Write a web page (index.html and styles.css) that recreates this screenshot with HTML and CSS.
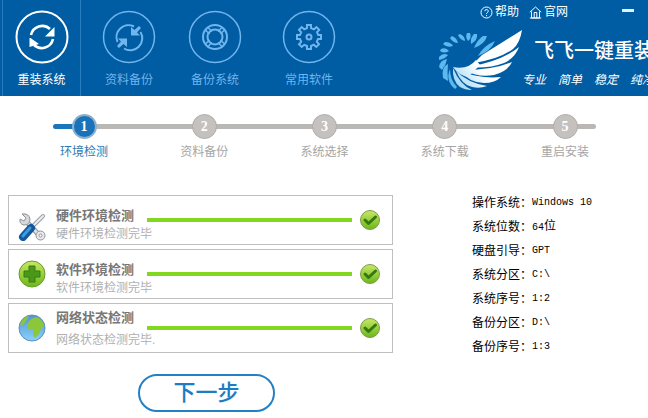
FILE: index.html
```html
<!DOCTYPE html>
<html lang="zh-CN">
<head>
    <meta charset="UTF-8">
    <meta name="viewport" content="width=device-width, initial-scale=1.0">
    <title>飞飞一键重装系统</title>
    <link rel="stylesheet" href="styles.css">
</head>
<body>
    <header class="header">
        <nav class="tabs">
            <button class="tab active">
                <svg class="tab-icon" viewBox="0 0 54 54">
                    <circle cx="27" cy="27" r="25.500" stroke-width="2"/>
                    <path d="M16 25a11.500 11.500 0 0 1 19-6M38 29a11.500 11.500 0 0 1-19 6" stroke-width="2.600"/>
                    <path class="solid" d="M39.500 17v9.500h-9.500zM14.500 28h1l8.500 6-9.500 3z"/>
                </svg>
                <span>重装系统</span>
            </button>
            <button class="tab">
                <svg class="tab-icon" viewBox="0 0 54 54">
                    <circle cx="27" cy="27" r="25.500"/>
                    <path d="M32 16.500a12 12 0 0 0-16.500 15.500M38.500 22a12 12 0 0 1-16.500 16.500" stroke-width="2"/>
                    <path class="solid" d="M29 17v8.500h9l-3-3 4-4.500-2-2-4.500 4zM25 37v-8.500h-9l3 3-4 4.500 2 2 4.500-4z"/>
                </svg>
                <span>资料备份</span>
            </button>
            <button class="tab">
                <svg class="tab-icon" viewBox="0 0 54 54">
                    <circle cx="27" cy="27" r="25.500"/>
                    <circle cx="27" cy="27" r="12" stroke-width="2"/>
                    <circle cx="27" cy="27" r="7.500" stroke-width="2"/>
                    <path d="M20 17.500l4 4M17.500 20l4 4M34 17.500l-4 4M36.500 20l-4 4M20 36.500l4-4M17.500 34l4-4M34 36.500l-4-4M36.500 34l-4-4"/>
                </svg>
                <span>备份系统</span>
            </button>
            <button class="tab spaced">
                <svg class="tab-icon" viewBox="0 0 54 54">
                    <circle cx="27" cy="27" r="25.500"/>
                    <path d="M25 15h4v3l3 1.300 2.500-2.200 2.700 2.700-2.200 2.500 1.200 2.700H39v4h-3l-1.200 2.700 2.200 2.500-2.700 2.700-2.500-2.200L29 36v3h-4v-3l-2.800-1.200-2.500 2.200-2.700-2.700 2.200-2.500L18 29h-3v-4h3l1.200-2.700-2.200-2.500 2.700-2.700 2.500 2.200L25 18z" stroke-width="2"/>
                    <circle cx="27" cy="27" r="2.500" stroke-width="2"/>
                </svg>
                <span>常用软件</span>
            </button>
        </nav>

        <div class="header-right">
            <div class="top-links">
                <a href="#">
                    <svg viewBox="0 0 13 13"><circle cx="6.500" cy="6.500" r="5.500"/><path d="M4.800 5.200a1.700 1.700 0 1 1 2.500 1.500q-.8.4-.8 1.300M6.500 9v1.200"/></svg>帮助</a>
                <a href="#">
                    <svg viewBox="0 0 13 13"><path d="M.8 6.200L6.500 1l5.700 5.200M2.500 5.500V12h8V5.500M5.200 12V6.500h2.600V12M.8 12h11.400"/></svg>官网</a>
                <button class="minimize" aria-label="最小化"></button>
            </div>
            <div class="brand">
                <svg class="logo" viewBox="0 0 84 62">
                    <defs>
                        <linearGradient id="wing" gradientUnits="userSpaceOnUse" x1="14" y1="58" x2="50" y2="28">
                            <stop offset="0" stop-color="#8fd0f4"/>
                            <stop offset=".7" stop-color="#fff"/>
                        </linearGradient>
                    </defs>
                    <!-- ring of small feathers -->
                    <g fill="#5db8ee">
                        <path d="M57 12Q53 22 40 27 45 17 57 12z"/>
                        <path d="M49 7Q47 15 36 19 39 11 45 7z"/>
                        <path d="M39 5Q40 11 33 15 32 9 36 5z"/>
                        <path d="M32 4Q34 9 30 12 27 8 29 4z"/>
                        <path d="M22 5Q27 7 27 12 22 11 20 6z"/>
                        <path d="M14 7Q19 9 20 14 15 14 12 9z"/>
                        <path d="M7 13Q13 13 15 17 9 19 5 15z"/>
                        <path d="M3 20Q8 18 11 22 6 25 2 22z"/>
                        <path d="M1 28Q5 23 10 26 7 30 1 31z"/>
                        <path d="M1 38Q2 31 9 30 8 36 4 41z"/>
                        <path d="M5 49Q3 38 10 35 9 43 10 52z"/>
                        <path d="M17 60Q7 52 12 40 12 51 19 58z"/>
                    </g>
                    <g fill="url(#wing)">
                        <path d="M84 1Q62 15 44 26L36 34Q62 30 75 20 82 14 84 1z"/>
                        <path d="M81 18Q64 32 30 38 50 40 66 34 77 29 81 18z"/>
                        <path d="M74 33Q56 41 26 41 40 49 56 46 69 43 74 33z"/>
                        <path d="M63 48Q42 50 22 42 32 54 46 54 57 54 63 48z"/>
                        <path d="M49 57Q30 54 18 42 24 56 34 58 42 60 49 57z"/>
                        <path d="M34 61Q22 56 15 39 14 52 22 58 27 61 34 61z"/>
                        <path d="M15 38Q30 41 38 31L42 36 30 48Q20 46 15 38z"/>
                    </g>
                </svg>
                <div class="brand-text">
                    <h1>飞飞一键重装</h1>
                    <p><span>专业</span><span>简单</span><span>稳定</span><span>纯净</span></p>
                </div>
            </div>
        </div>
    </header>

    <ol class="steps">
        <li class="current"><b>1</b><span>环境检测</span></li>
        <li><b>2</b><span>资料备份</span></li>
        <li><b>3</b><span>系统选择</span></li>
        <li><b>4</b><span>系统下载</span></li>
        <li><b>5</b><span>重启安装</span></li>
    </ol>

    <main class="content">
        <section class="checks">
            <div class="panel">
                <svg class="panel-icon low" viewBox="0 0 28 28">
                    <path d="M7 7l14 15" stroke="#8d9499" stroke-width="5"/>
                    <path d="M7 7l14 15" stroke="#dfe3e6" stroke-width="3"/>
                    <path d="M4 1l4 4-2 3-4-2q-1 5 4 6 6 0 6-6-1-6-8-5z" fill="#d5d9dc" stroke="#8d9499"/>
                    <circle cx="22.500" cy="22.500" r="4.500" fill="#e8eaec" stroke="#8d9499"/>
                    <circle cx="22.500" cy="22.500" r="1.500" fill="#fff" stroke="#8d9499"/>
                    <path d="M25 3L13 15" stroke="#979ea3" stroke-width="4" stroke-linecap="round"/>
                    <path d="M25 3L13 15" stroke="#eceeef" stroke-width="2" stroke-linecap="round"/>
                    <path d="M13 15L5 24" stroke="#14589b" stroke-width="8" stroke-linecap="round"/>
                    <path d="M12 15L5 23" stroke="#3e9ae0" stroke-width="3" stroke-linecap="round"/>
                </svg>
                <div class="panel-text">
                    <h2>硬件环境检测</h2>
                    <p>硬件环境检测完毕</p>
                </div>
                <div class="bar"></div>
                <svg class="tick" viewBox="0 0 20 20"><use href="#tick"/></svg>
            </div>
            <div class="panel">
                <svg class="panel-icon" viewBox="0 0 28 28">
                    <defs>
                        <linearGradient id="green" x1="0" y1="0" x2="0" y2="1">
                            <stop offset="0" stop-color="#c9e765"/>
                            <stop offset="1" stop-color="#6cb71a"/>
                        </linearGradient>
                    </defs>
                    <circle cx="14" cy="14" r="13" fill="url(#green)" stroke="#6a9c2c"/>
                    <path d="M11 6h6v5h5v6h-5v5h-6v-5H6v-6h5z" fill="#4a9818" stroke="#357a10" stroke-linejoin="round"/>
                </svg>
                <div class="panel-text">
                    <h2>软件环境检测</h2>
                    <p>软件环境检测完毕</p>
                </div>
                <div class="bar"></div>
                <svg class="tick" viewBox="0 0 20 20"><use href="#tick"/></svg>
            </div>
            <div class="panel">
                <svg class="panel-icon" viewBox="0 0 28 28">
                    <defs>
                        <linearGradient id="sea" x1="0" y1="0" x2="0" y2="1">
                            <stop offset="0" stop-color="#4f94d8"/>
                            <stop offset="1" stop-color="#8ad2f8"/>
                        </linearGradient>
                    </defs>
                    <circle cx="14" cy="14" r="13" fill="url(#sea)" stroke="#5b8fc0"/>
                    <path d="M12 6q5-4 9-2 4 3 5 8l-3 3-2 5-4 4-2-3v-5l-5-1-1-4zM2 10q2-5 7-8l2 1-3 4-4 5z" fill="#8cc63a"/>
                </svg>
                <div class="panel-text loose">
                    <h2>网络状态检测</h2>
                    <p>网络状态检测完毕.</p>
                </div>
                <div class="bar"></div>
                <svg class="tick" viewBox="0 0 20 20">
                    <g id="tick">
                        <circle cx="10" cy="10" r="9.500" fill="url(#green)" stroke="#7d9b50"/>
                        <path d="M5 10l3.500 3.500L15.500 7" fill="none" stroke="#33790f" stroke-width="3" stroke-linecap="round" stroke-linejoin="round"/>
                    </g>
                </svg>
            </div>
            <button class="next">下一步</button>
        </section>

        <dl class="info">
            <div><dt>操作系统：</dt><dd>Windows 10</dd></div>
            <div><dt>系统位数：</dt><dd>64<span>位</span></dd></div>
            <div><dt>硬盘引导：</dt><dd>GPT</dd></div>
            <div><dt>系统分区：</dt><dd>C:\</dd></div>
            <div><dt>系统序号：</dt><dd>1:2</dd></div>
            <div><dt>备份分区：</dt><dd>D:\</dd></div>
            <div><dt>备份序号：</dt><dd>1:3</dd></div>
        </dl>
    </main>
</body>
</html>
```
FILE: styles.css
```css
* {
    box-sizing: border-box;
    margin: 0;
    padding: 0;
}

body {
    font-family: "Liberation Sans", "Noto Sans CJK SC", sans-serif;
    font-size: 12px;
    line-height: 18px;
    background-color: #fff;
    color: #000;
}

button {
    font: inherit;
    background: none;
    border: none;
    cursor: pointer;
}

/* Header */
.header {
    display: flex;
    justify-content: space-between;
    height: 96px;
    overflow: hidden;
    background-color: #005ca3;
}

.tabs {
    display: flex;
    padding-left: 2px;
}

.tab {
    display: flex;
    flex-direction: column;
    align-items: center;
    gap: 7px;
    width: 86px;
    padding-top: 10px;
    color: #6fb5ee;
}

.tab.active {
    width: 79px;
    margin-right: 5px;
    color: #fff;
    border-left: 1px solid #2a7cbd;
    border-right: 1px solid #2a7cbd;
}

.tab.spaced {
    margin-left: 8px;
}

.tab-icon {
    width: 54px;
    height: 54px;
    fill: none;
    stroke: currentColor;
    stroke-width: 1.5;
}

.tab-icon .solid {
    fill: currentColor;
    stroke: none;
}

.header-right {
    flex: none;
    width: 210px;
}

.top-links {
    display: flex;
    align-items: center;
    gap: 10px;
    height: 24px;
    padding: 0 14px 0 42px;
}

.top-links a {
    display: flex;
    align-items: center;
    gap: 2px;
    color: #fff;
    text-decoration: none;
}

.top-links svg {
    width: 13px;
    height: 13px;
    fill: none;
    stroke: #fff;
}

.minimize {
    width: 12px;
    height: 3px;
    margin: 0 0 4px auto;
    background-color: #e0f4ff;
}

.brand {
    display: flex;
    align-items: flex-start;
    padding-top: 5px;
}

.logo {
    flex: none;
    width: 84px;
    height: 62px;
}

.brand-text {
    color: #fff;
    white-space: nowrap;
}

.brand-text h1 {
    padding: 8px 0 0 12px;
    font-size: 20px;
    font-weight: 500;
    line-height: 28px;
}

.brand-text p {
    display: flex;
    gap: 12px;
    padding-top: 6px;
    font-style: italic;
}

/* Step progress */
.steps {
    position: relative;
    display: flex;
    justify-content: space-between;
    margin: 18px 52px 0 53px;
    list-style: none;
    color: #a5a5a5;
}

.steps::before {
    content: "";
    position: absolute;
    top: 10px;
    left: 0;
    right: 0;
    height: 5px;
    border-radius: 3px;
    background: linear-gradient(to right, #1b75bb 31px, #b9b8b4 31px);
}

.steps li {
    position: relative;
    display: flex;
    flex-direction: column;
    align-items: center;
    gap: 4px;
    width: 62px;
}

.steps b {
    width: 25px;
    height: 25px;
    border: 1px solid #b0aeab;
    border-radius: 50%;
    background-color: #c4c1be;
    color: #fff;
    font: bold 14px/23px "Liberation Serif", serif;
    text-align: center;
}

.steps .current {
    color: #2a7ab5;
}

.steps .current b {
    border: 2px solid #8fb0cb;
    background-color: #1a72b9;
    line-height: 21px;
}

/* Check results */
.content {
    display: flex;
    padding: 34px 0 6px 8px;
}

.checks {
    flex: 1;
    display: flex;
    flex-direction: column;
    gap: 4px;
}

.panel {
    display: flex;
    align-items: center;
    height: 50px;
    padding: 0 12px 0 9px;
    border: 1px solid #bfbfbf;
}

.panel-icon {
    flex: none;
    width: 28px;
    height: 28px;
}

.panel-icon.low {
    align-self: flex-end;
    margin-bottom: 3px;
}

.panel-text {
    flex: none;
    width: 101px;
    padding: 10px 0 0 10px;
    white-space: nowrap;
}

.panel-text h2 {
    font-size: 13px;
    line-height: 18px;
    color: #777;
}

.panel-text p {
    color: #b0b0b0;
}

.panel-text.loose {
    padding-top: 2px;
}

.panel-text.loose h2 {
    padding-bottom: 4px;
}

.bar {
    flex: 1;
    height: 4px;
    margin-right: 8px;
    background-color: #82d81e;
}

.tick {
    flex: none;
    width: 20px;
    height: 20px;
}

.next {
    width: 137px;
    height: 38px;
    margin: 17px 0 0 130px;
    border: 2px solid #2380c4;
    border-radius: 19px;
    color: #1b7dc4;
    font-size: 22px;
    font-weight: 500;
    line-height: 32px;
}

/* System info */
.info {
    flex: none;
    width: 176px;
    margin: -4px 0 0 79px;
}

.info div {
    display: flex;
    align-items: center;
    height: 24px;
}

.info dd {
    font-family: "Liberation Mono", "Noto Sans CJK SC", monospace;
    font-size: 10px;
}

.info dd span {
    font-size: 12px;
}
```
